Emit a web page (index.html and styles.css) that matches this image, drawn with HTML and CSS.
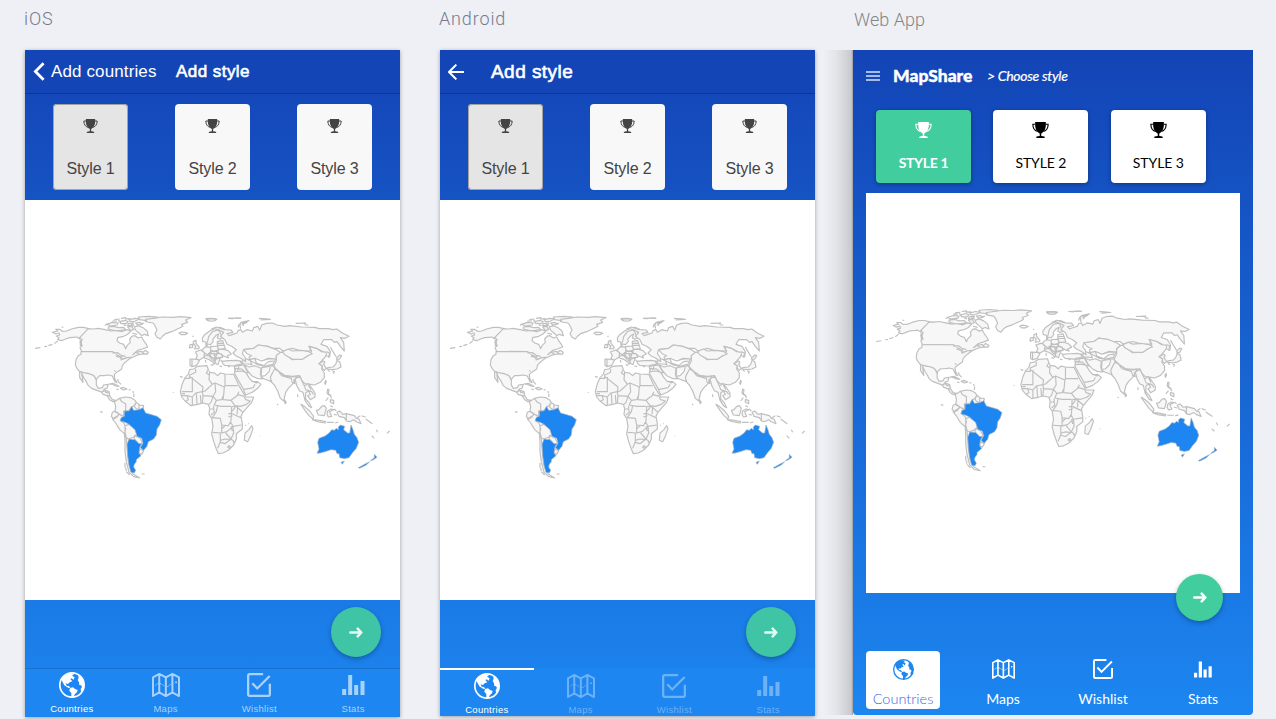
FILE: index.html
```html
<!DOCTYPE html>
<html lang="en">
<head>
<meta charset="utf-8">
<title>MapShare</title>
<link rel="stylesheet" href="styles.css">
</head>
<body>
<svg class="sprite" aria-hidden="true">
  <symbol id="trophy" viewBox="0 0 44 42">
    <path fill="currentColor" d="M8 0H36V7C36 20 30 27 24 30V37C28 37 31 38 33 39V42H11V39C13 38 16 37 20 37V30C14 27 8 20 8 7Z"/>
    <path fill="none" stroke="currentColor" stroke-width="3" d="M9 6H2C2 16 7 23 14 25M35 6H42C42 16 37 23 30 25"/>
  </symbol>
  <symbol id="earth" viewBox="0 0 78 78">
    <circle cx="39" cy="39" r="36.5" fill="none" stroke="currentColor" stroke-width="5"/>
    <path fill="currentColor" d="M20 8L34 4L45 7L39 11L47 16L43 24L39 19L34 21L40 28L32 31L27 36L20 34L23 41L30 42L34 48L27 47L16 40L9 27L9 18ZM33 48L42 46L48 51L56 54L54 61L48 66L43 76L37 74L37 63L31 56ZM57 8L72 22L76 39L71 56L66 60L65 51L69 45L66 40L61 39L60 31L56 24L59 17Z"/>
  </symbol>
  <symbol id="map" viewBox="0 0 85 73">
    <path fill="none" stroke="currentColor" stroke-width="6" stroke-linejoin="round" d="M3 13L22 3L42 13L62 3L82 13V70L62 59L42 70L22 59L3 70ZM22 3V59M42 13V70M62 3V59"/>
    <path fill="none" stroke="currentColor" stroke-width="3" stroke-dasharray="5 3" d="M10 38C17 29 26 31 33 36S47 45 55 36L59 31"/>
    <circle cx="73" cy="28" r="3" fill="currentColor"/>
  </symbol>
  <symbol id="check" viewBox="0 0 73 73">
    <path fill="none" stroke="currentColor" stroke-width="7" d="M49 3.500H8Q3.500 3.500 3.500 8V65Q3.500 69.500 8 69.500H65Q69.500 69.500 69.500 65V33M16 31L31 47L69 9"/>
  </symbol>
  <symbol id="stats" viewBox="0 0 68 60">
    <path fill="currentColor" d="M0 42H12V60H0ZM18 0H30V60H18ZM36 30H48V60H36ZM55 18H67V60H55Z"/>
  </symbol>
  <symbol id="forward" viewBox="0 0 42 33">
    <path fill="none" stroke="currentColor" stroke-width="7.500" stroke-linecap="round" stroke-linejoin="round" d="M4 16.500H36M26 5L37 16.500L26 28"/>
  </symbol>

  <symbol id="world" viewBox="0 0 1125 540">
    <g class="land">
      <!-- North America -->
      <path d="M192 71L175 67L160 67L140 72L125 78L112 79L104 73L92 73L98 78L82 82L92 87L102 84L104 90L94 93L102 98L98 104L110 107L122 102L134 98L146 97L156 96L164 102L164 98Z"/>
      <path d="M98 108L88 116M82 118L70 122M66 124L58 125M46 128L30 130M110 66l5 1"/>
      <path d="M190 71L205 72L220 70L240 74L258 78L275 76L290 80L305 74L318 78L308 88L296 94L278 98L276 107L284 114L296 118L302 131L306 122L316 112L314 102L322 93L330 92L340 99L350 96L356 107L364 118L368 126L352 132L338 136L326 147L338 141L350 139L358 147L344 148L332 152L320 158L306 158L290 164L286 156L276 148L262 140L170 139L165 128L172 122L165 112L172 104L164 98Z"/>
      <path d="M168 140L262 140L278 150L274 154L292 158L288 165L306 158L320 157L308 166L298 174L292 182L290 192L278 200L268 208L269 220L276 233L270 230L262 213L250 210L236 212L224 212L216 220L214 226L208 214L202 210L192 206L180 204L164 200L156 190L151 180L153 164L160 152L168 148Z"/>
      <path d="M164 200L180 204L192 206L202 210L208 214L214 226L214 240L220 250L232 248L236 240L250 238L246 250L238 252L232 262L216 256L200 250L190 242L184 230L176 218L170 204L174 232L164 218L164 206Z"/>
      <path d="M230 262L240 256L252 260L254 272L262 284L272 286L264 290L254 284L246 272L234 268ZM238 252L242 262L252 264M246 272L254 272"/>
      <path d="M253 237L264 235L282 244L272 243L262 238ZM286 250L294 247L306 252L296 255ZM274 252l7 2M311 254l6 1M278 222l2 8l8 8M324 258l1 6M327 266l-1 10M268 196l4 4"/>
      <path d="M245 58L262 52L280 54L276 60L256 63ZM250 66L268 64L280 68L296 67L302 74L284 77L266 76L250 72ZM284 50L300 46L310 50L304 56L288 56ZM312 44L330 40L344 42L330 49L316 50ZM340 36L372 34L398 36L380 42L360 46L344 44ZM310 56L326 54L322 62L308 62ZM308 66L320 64L326 74L316 76ZM328 66L340 62L354 68L366 78L370 92L358 88L350 92L342 84L332 76ZM332 54L344 52L352 58L338 60ZM268 44l16 -2M288 40l16 -2M240 62l6 -6M322 84l14 4M360 50l14 -3M296 60l8 2M262 48l14 0M280 46l8 6M318 58l10 6M300 42l16 -1M348 56l10 -2"/>
      <path d="M322 150L332 142L342 146M352 144L360 136L370 142L366 148L356 146ZM262 144L278 143L290 152M286 162L292 152L302 154M166 104v20M169 106v18"/>
      <path d="M362 43L384 40L412 36L444 37L466 35L498 38L482 45L488 52L470 58L474 64L462 70L440 80L422 86L414 92L406 102L396 97L390 86L396 75L390 62L384 54L366 51Z"/>
      <path d="M462 84L468 81L480 82L488 85L480 89L468 89Z"/>
      <!-- South America -->
      <path d="M268 290L284 280L290 290L302 296L302 316L296 318L296 334L284 328L270 320L272 304ZM284 280L300 276L318 278L328 284L334 292L328 302L320 306L312 316L302 318L302 296L290 290ZM334 292L344 300L356 302L354 312L340 314L330 308L328 300ZM342 300V314M262 322L270 318L282 326L276 336L266 342L259 334ZM262 342L278 332L284 328L296 336L286 346L298 356L302 372L298 386L284 374L272 354ZM300 362L312 358L330 372L336 386L328 396L310 402L304 398L300 382ZM328 392L344 398L352 412L348 420L340 416L328 402ZM298 384L304 400L306 424L308 452L312 480L318 500L326 508L344 519L326 515L312 502L304 470L300 440L300 410ZM342 430L356 438L350 448L342 444Z"/>
      <path d="M300 474v14M303 488v10M304 500l10 10M350 507h9M225 320l8 2M445 262v2M465 214l8 3M503 94h2"/>
    </g>
    <g class="land" transform="translate(435 15)">
      <!-- Europe -->
      <path d="M97 84L104 74L118 64L134 54L150 52L164 58L158 66L162 80L150 88L142 84L146 72L138 76L128 88L130 94L122 104L112 102L106 96L98 94ZM112 98L116 80L128 64L144 60L150 66L152 74"/>
      <path d="M70 94L78 91L78 100L88 112L86 116L74 117L77 108L70 102ZM60 104L68 103L68 112L58 114ZM68 78l2 2"/>
      <path d="M60 147L82 148L88 152L80 166L66 170L60 166ZM66 148V168M76 126L92 120L104 128L102 142L88 150L78 146L82 136ZM104 112L110 110L122 112L122 126L112 134L102 128L96 120ZM108 100L112 106L108 110ZM122 110L142 108L146 120L130 124L122 120ZM102 138L116 136L126 148L136 156L132 163L128 156L116 148L104 144ZM116 132L132 130L140 136L132 146L126 142ZM126 124L144 124L140 132L120 130ZM134 146L152 142L148 152L144 164L136 160ZM140 130L154 132L158 142L140 144L132 136ZM144 118L162 118L174 122L184 132L172 138L176 144L160 138L154 132L144 128ZM142 94L158 92L162 104L166 116L146 118L142 106ZM142 100H160M143 106H162"/>
      <path d="M106 150l2 8M122 164l8 2M152 150l4 4M148 168l8 2M174 170l6-1M120 126v8M128 144l10 8M136 148l12 -4"/>
      <path d="M156 154L176 152L200 151L216 154L220 162L206 164L190 168L164 166L158 160ZM216 154L226 146L240 150L246 164L232 162L220 162M196 166L206 164L212 172L200 184L196 176M210 154l8 10"/>
      <path d="M108 26L122 25L136 26L126 32L112 31ZM174 25L190 26M194 24L214 25M204 52L208 42L232 36L210 48L212 56M268 26L296 28"/>
    </g>
    <g class="land" transform="translate(540 0)">
      <!-- Asia -->
      <path d="M20 72L34 66L58 74L78 75L84 82L66 86L72 92L84 88L96 84L100 76L108 74L112 82L126 74L142 78L146 68L158 64L164 76L170 60L184 55L202 54L216 60L240 64L254 62L290 66L330 67L342 71L370 71L384 74L395 72L412 84L432 94L420 100L406 98L416 112L418 138L406 124L396 110L388 112L380 104L356 104L348 118L366 124L376 140L374 156L364 152L350 138L334 130L312 124L318 138L290 138L262 130L234 138L224 130L200 130L188 124L160 120L146 130L116 134L112 146L120 156L122 170L108 160L92 152L84 144L94 134L80 124L66 118L60 104L46 94L56 82L44 76L34 72Z"/>
      <path d="M116 134L146 130L160 120L188 124L214 134L226 142L214 152L214 162L190 160L170 168L150 160L134 164L132 156L140 152L126 146ZM130 164L150 160L170 168L190 162L212 162L204 178L180 184L160 180L142 170ZM150 160L154 174L176 182L190 170L206 168"/>
      <path d="M214 152L226 142L234 142L262 164L292 162L312 150L320 138L312 124L334 130L350 140L366 142L362 154L350 168L342 176L352 182L350 192L358 204L358 218L346 232L328 240L316 238L300 236L290 226L284 212L262 214L240 212L222 200L206 184L214 168Z"/>
      <path d="M232 140L250 132L262 138L290 136L312 140L322 146L308 152L292 163L262 162L240 150Z"/>
      <path d="M342 176L356 168L360 172L356 178L364 190L358 196L352 190L352 182ZM394 160L404 150L410 152L404 162L396 164ZM396 166L404 170L408 186L396 192L382 194L366 192L368 188L384 186L392 178ZM368 194l6 6M382 198l6 2l-3 6M364 140l10 4l-4 14M376 126L384 140L394 156M362 226l2 4l-3 8l-2 -4Z"/>
      <path d="M206 190L222 200L240 212L262 216L276 214L268 228L262 238L250 250L242 262L236 288L226 280L218 258L208 240L198 230L190 222L200 208ZM222 202L230 212L258 220M258 218L262 232L270 236L266 222M238 284L244 292L240 296Z"/>
      <path d="M170 188L204 182L210 190L200 208L196 218L200 230L178 222L168 216ZM168 214L180 212L192 200L196 186M118 180L132 186L150 182L168 190L166 208L172 222L156 220L140 212L128 198Z"/>
      <path d="M92 190L110 192L122 202L132 218L142 230L158 230L168 238L158 250L142 262L122 270L114 250L100 226L88 204ZM114 254L144 248L150 238M88 184L116 180L130 204L108 198L90 200ZM102 184L98 196M142 228L154 234L160 230"/>
      <path d="M270 222L284 214L292 230L298 242L310 236L318 246L330 264L330 276L316 284L308 272L316 268L310 258L302 264L302 282L312 292L320 308L312 304L300 286L294 262L284 258L276 244ZM298 242L302 254L320 260L326 268M310 240L318 254M278 268v8M216 298l4 1"/>
      <path d="M288 298L298 304L314 318L326 334L324 342L312 332L300 316ZM322 344L338 345L362 350L360 354L338 350ZM366 352H386M390 354l10-3M334 316L342 314L350 304L358 302L364 310L358 332L340 330ZM368 318L378 312L386 314L374 320L380 334L370 336L366 328ZM368 252L372 254L370 266L378 272L372 270L366 264ZM376 284L386 286L386 296L376 292ZM362 288l8-10M376 272l4 8M388 312l6 6M386 328l10 2M376 302l8 4"/>
      <path d="M396 322L404 318L414 328L424 326L448 332L454 340L462 342L468 356L454 350L446 344L434 350L424 348L418 338L402 334ZM424 326V346M456 338l10-6M470 332L482 337M482 342L502 356M514 374l4 8M546 385l8-7M500 392l8 8"/>
      <path d="M4 42L36 42L28 48L12 48ZM70 40L108 39M104 62l4-10l24-5l-20 8l4 8M162 40l34 3l-28 2M272 55l30-1l-4 4M300 60h10"/>
    </g>
    <g class="land" transform="translate(450 180)">
      <!-- Africa -->
      <path d="M44 14L56 12L68 4L96 2L100 14L104 22L118 24L128 32L136 24L150 27L176 28L184 44L192 62L204 82L212 96L236 96L230 112L216 128L204 142L198 154L202 176L202 192L184 206L184 222L176 240L160 256L144 264L130 266L124 252L116 230L110 206L114 184L110 160L102 148L104 130L100 118L84 114L68 118L48 122L30 108L20 96L16 80L22 56L30 38L40 28Z"/>
      <path d="M30 40H44V30L62 22V12M52 36V80H20M44 34L84 66L82 80L62 84L52 96L36 92L20 92M104 22L102 44L112 58L90 78L82 80M100 14L94 24L103 30M150 27V62H188M112 58L120 54L148 66L150 62M120 54L122 80L114 94L84 92L82 80M148 66L146 90L140 104L124 106L114 94M146 90L144 104L168 106L186 92L192 80M186 88L208 94M124 106L118 120L140 124L168 124M84 92L82 114M114 94L108 112L102 118M128 122L124 140L112 158L136 160L140 180L160 182L168 168L170 124M102 132H116V122M116 132L118 142L108 150M172 124L186 126L204 142M172 146L198 158M168 106L180 122L196 124L214 118L226 108L212 104L208 96M112 202L140 204L156 200L174 184L166 170M140 180V204M136 204V230L128 250M136 226L150 222L168 224M152 204L168 222L150 236L136 232M174 184L200 180M174 184L176 204L168 222L178 230M36 92L40 104L32 108M52 96V122M64 84L66 118M76 90L78 114M20 86H30M160 146H172M160 156L172 152M158 246l4-4l5 4l-5 4ZM174 230l4 4M188 126l-2 22M180 128l-10 12M142 190l10-10M168 184l4 14"/>
      <path d="M230 182L234 190L226 214L218 230L208 226L210 204L222 194ZM254 212v2M210 180l2 2M220 176h2"/>
    </g>
    <g class="visited">
      <path d="M298 318L312 318L320 304L326 316L342 314L354 308L362 324L376 328L396 334L409 344L404 360L396 372L394 390L386 402L370 410L366 424L356 436L346 428L354 414L350 400L336 394L330 374L312 358L300 352L286 348L288 338L298 334Z"/>
      <path d="M312 402L330 404L342 416L350 416L344 428L342 444L348 452L334 464L334 470L328 478L326 486L332 496L328 504L318 502L312 480L308 450L306 418Z"/>
      <g transform="translate(540 0)">
        <path d="M336 445L342 432L338 412L342 400L360 393L372 384L380 374L388 376L394 370L400 374L400 366L406 360L419 364L416 374L428 384L434 384L438 360L444 374L448 388L456 398L461 412L454 430L442 444L432 458L418 461L404 458L402 446L396 446L392 436L378 434L360 440L346 444Z"/>
        <path d="M408 472L418 468L412 478ZM460 488L480 477L494 470L484 480L464 490ZM496 467L508 458L508 448L516 457L504 465Z"/>
      </g>
    </g>
  </symbol>
</svg>

<main class="showcase">
  <section class="platform">
    <h2 class="platform-name">iOS</h2>
    <div class="phone ios">
      <header class="navbar">
        <svg class="chevron" viewBox="0 0 36 58"><path d="M32 4L7 29L32 54"/></svg>
        <span class="back-label">Add countries</span>
        <strong class="title">Add style</strong>
      </header>
      <div class="styles">
        <button class="style selected"><svg><use href="#trophy"/></svg><span>Style 1</span></button>
        <button class="style"><svg><use href="#trophy"/></svg><span>Style 2</span></button>
        <button class="style"><svg><use href="#trophy"/></svg><span>Style 3</span></button>
      </div>
      <div class="canvas"><svg class="world"><use href="#world"/></svg></div>
      <div class="actions"><button class="fab"><svg><use href="#forward"/></svg></button></div>
      <nav class="tabs">
        <a class="tab active"><svg class="i-earth"><use href="#earth"/></svg><span>Countries</span></a>
        <a class="tab"><svg class="i-map"><use href="#map"/></svg><span>Maps</span></a>
        <a class="tab"><svg class="i-check"><use href="#check"/></svg><span>Wishlist</span></a>
        <a class="tab"><svg class="i-stats"><use href="#stats"/></svg><span>Stats</span></a>
      </nav>
    </div>
  </section>

  <section class="platform">
    <h2 class="platform-name">Android</h2>
    <div class="phone android">
      <header class="navbar">
        <svg class="arrow" viewBox="0 0 48 48"><path d="M25 2L3 24L25 46M3 24H48"/></svg>
        <strong class="title">Add style</strong>
      </header>
      <div class="styles">
        <button class="style selected"><svg><use href="#trophy"/></svg><span>Style 1</span></button>
        <button class="style"><svg><use href="#trophy"/></svg><span>Style 2</span></button>
        <button class="style"><svg><use href="#trophy"/></svg><span>Style 3</span></button>
      </div>
      <div class="canvas"><svg class="world"><use href="#world"/></svg></div>
      <div class="actions"><button class="fab"><svg><use href="#forward"/></svg></button></div>
      <nav class="tabs">
        <a class="tab active"><svg class="i-earth"><use href="#earth"/></svg><span>Countries</span></a>
        <a class="tab"><svg class="i-map"><use href="#map"/></svg><span>Maps</span></a>
        <a class="tab"><svg class="i-check"><use href="#check"/></svg><span>Wishlist</span></a>
        <a class="tab"><svg class="i-stats"><use href="#stats"/></svg><span>Stats</span></a>
      </nav>
    </div>
  </section>

  <section class="platform platform-web">
    <h2 class="platform-name">Web App</h2>
    <div class="web">
      <header class="web-bar">
        <svg class="menu" viewBox="0 0 14 10"><path d="M0 1H14M0 5H14M0 9H14"/></svg>
        <strong class="brand">MapShare</strong>
        <em class="crumb">&gt; Choose style</em>
      </header>
      <div class="web-styles">
        <button class="web-style selected"><svg><use href="#trophy"/></svg><span>STYLE 1</span></button>
        <button class="web-style"><svg><use href="#trophy"/></svg><span>STYLE 2</span></button>
        <button class="web-style"><svg><use href="#trophy"/></svg><span>STYLE 3</span></button>
      </div>
      <div class="web-canvas">
        <svg class="world"><use href="#world"/></svg>
        <button class="fab"><svg><use href="#forward"/></svg></button>
      </div>
      <nav class="web-tabs">
        <a class="web-tab active"><svg class="i-earth"><use href="#earth"/></svg><span>Countries</span></a>
        <a class="web-tab"><svg class="i-map"><use href="#map"/></svg><span>Maps</span></a>
        <a class="web-tab"><svg class="i-check"><use href="#check"/></svg><span>Wishlist</span></a>
        <a class="web-tab"><svg class="i-stats"><use href="#stats"/></svg><span>Stats</span></a>
      </nav>
    </div>
  </section>
</main>
</body>
</html>
```

FILE: styles.css
```css
* { box-sizing: border-box; }

body {
  margin: 0;
  height: 719px;
  overflow: hidden;
  background: #eff0f5;
  font-family: "Liberation Sans", Arial, sans-serif;
}

button {
  margin: 0;
  padding: 0;
  border: 0;
  font: inherit;
}

svg { display: block; flex: none; }
.sprite { position: absolute; width: 0; height: 0; }

.showcase {
  display: flex;
  gap: 40px;
  padding-left: 25px;
}
.platform { width: 375px; }
.platform-web { width: 400px; margin-left: -2px; }

.platform-name {
  height: 50px;
  margin: 0 0 0 -1px;
  padding-top: 8px;
  font: 300 18px/22px Roboto, sans-serif;
  letter-spacing: .85px;
  color: #747b90;
}
.platform-web .platform-name {
  margin-left: 1px;
  padding-top: 9px;
  letter-spacing: .05px;
  color: #858585;
}

/* Phones */
.phone {
  display: flex;
  flex-direction: column;
  background: linear-gradient(#1444b6, #1c86f0);
  box-shadow: 0 1px 4px rgba(0, 0, 0, .35);
}
.ios { height: 667px; }
.android { height: 666px; }

.navbar {
  display: flex;
  align-items: center;
  height: 44px;
  background: #1445b6;
  border-bottom: 1px solid #11368c;
  color: #fff;
  white-space: nowrap;
}
.navbar svg path { fill: none; stroke: #fff; }
.chevron { width: 12px; height: 19px; margin-left: 8px; }
.chevron path { stroke-width: 8.500; }
.back-label { margin-left: 6px; padding-top: 1px; width: 107px; font-size: 17px; letter-spacing: .12px; }
.title { padding-top: 1px; font-weight: 400; -webkit-text-stroke: .6px #fff; }
.ios .title { margin-left: 18px; font-size: 17px; letter-spacing: .45px; }
.arrow { width: 16px; height: 16px; margin-left: 8px; }
.arrow path { stroke-width: 6; }
.android .title { margin-left: 27px; font-size: 19px; letter-spacing: .45px; }

.styles {
  display: flex;
  justify-content: space-between;
  height: 106px;
  padding: 10px 28px;
}
.style {
  display: flex;
  flex-direction: column;
  align-items: center;
  justify-content: space-between;
  width: 75px;
  height: 86px;
  padding: 15px 0 12px;
  border-radius: 4px;
  background: #f8f8f8;
  color: #444;
  font-size: 16px;
  line-height: 18px;
  letter-spacing: -.1px;
}
.style svg { width: 15px; height: 14px; }
.style.selected { background: #e5e5e5; box-shadow: inset 0 0 0 1px #a2a2a2; }

.canvas { height: 400px; padding-top: 105px; background: #fff; }
.world { width: 375px; height: 180px; }
.land { fill: #f7f7f7; stroke: #bfbfbf; stroke-width: 3.500; stroke-linejoin: round; }
.visited { fill: #1d86f0; stroke: #a9b6c6; stroke-width: 2; }

.actions {
  display: flex;
  justify-content: flex-end;
  height: 68px;
  padding: 7px 19px 0 0;
}
.fab {
  display: flex;
  align-items: center;
  justify-content: center;
  width: 50px;
  height: 50px;
  border-radius: 50%;
  background: #3fc5a5;
  color: #e4f9f4;
  box-shadow: 0 2px 5px rgba(0, 0, 0, .28);
}
.fab svg { width: 14px; height: 11px; }

.tabs {
  display: flex;
  flex: 1;
  background: #1d86f0;
}
.tab {
  display: grid;
  grid-template-rows: 28px 14px;
  row-gap: 2px;
  flex: 1;
  justify-items: center;
  align-items: center;
  align-content: start;
  font-size: 9.500px;
  letter-spacing: .3px;
  color: #a9d2fb;
}
.tab.active { color: #fff; }
.ios .tabs { padding-top: 2px; border-top: 1px solid #1870cf; }
.android .tab {
  padding-top: 2px;
  border-top: 2px solid transparent;
  color: #6db2f7;
}
.android .tab.active { border-top-color: #fff; color: #fff; }
.i-earth { width: 26px; height: 26px; }
.i-map { width: 28px; height: 24px; }
.i-check { width: 24px; height: 24px; }
.i-stats { width: 23px; height: 20px; }

/* Web app */
.web {
  position: relative;
  height: 665px;
  padding: 0 13px;
  background: linear-gradient(#1344b6, #1c86f0);
  border-radius: 0 0 4px 4px;
  font-family: Lato, sans-serif;
}
.web::before {
  content: "";
  position: absolute;
  top: 0;
  bottom: 0;
  left: -30px;
  width: 30px;
  background: linear-gradient(90deg, rgba(0, 0, 0, 0), rgba(0, 0, 0, .05) 45%, rgba(0, 0, 0, .16) 94%, rgba(0, 0, 0, .35));
}
.web-bar {
  display: flex;
  align-items: center;
  height: 51px;
  color: #fff;
}
.menu { width: 14px; height: 10px; }
.menu path { stroke: #d7e1f7; stroke-width: 1.400; }
.brand {
  width: 81px;
  margin-left: 13px;
  font-size: 17.500px;
  font-weight: 900;
  -webkit-text-stroke: .4px #fff;
}
.crumb { margin-left: 13px; font-size: 14px; letter-spacing: -.3px; -webkit-text-stroke: .2px #fff; }
.web-styles { display: flex; gap: 22.400px; padding: 9px 0 10px 10px; }
.web-style {
  display: flex;
  flex-direction: column;
  align-items: center;
  justify-content: space-between;
  width: 95px;
  height: 73px;
  padding: 12px 0;
  border-radius: 4px;
  background: #fff;
  box-shadow: 0 1px 4px rgba(0, 0, 0, .35);
  color: #000;
  font-size: 14px;
  line-height: 17px;
  letter-spacing: -.1px;
}
.web-style svg { width: 17px; height: 16px; }
.web-style.selected { background: #42cd9f; color: #fff; font-weight: 700; letter-spacing: -.35px; }
.web-canvas {
  position: relative;
  height: 400px;
  padding-top: 105px;
  background: #fff;
}
.web-canvas .world { width: 374px; }
.web-canvas .fab {
  position: absolute;
  right: 17px;
  bottom: -28px;
  width: 47px;
  height: 47px;
  background: #42cd9f;
  color: #fff;
}
.web-tabs {
  display: flex;
  justify-content: space-between;
  padding-top: 58px;
}
.web-tab {
  display: grid;
  grid-template-rows: 22px 18px;
  row-gap: 10px;
  justify-items: center;
  align-items: center;
  width: 74px;
  height: 58px;
  padding: 7px 0 1px;
  border-radius: 4px;
  color: #fff;
  font-size: 14px;
  line-height: 18px;
}
.web-tab.active { background: #fff; color: #1d86f0; }
.web-tab.active span { font-weight: 300; font-size: 14.500px; color: #3f66e0; }
.web-tab .i-earth { width: 21px; height: 21px; }
.web-tab .i-map { width: 23px; height: 20px; }
.web-tab .i-check { width: 20px; height: 20px; }
.web-tab .i-stats { width: 18px; height: 17px; }
```
